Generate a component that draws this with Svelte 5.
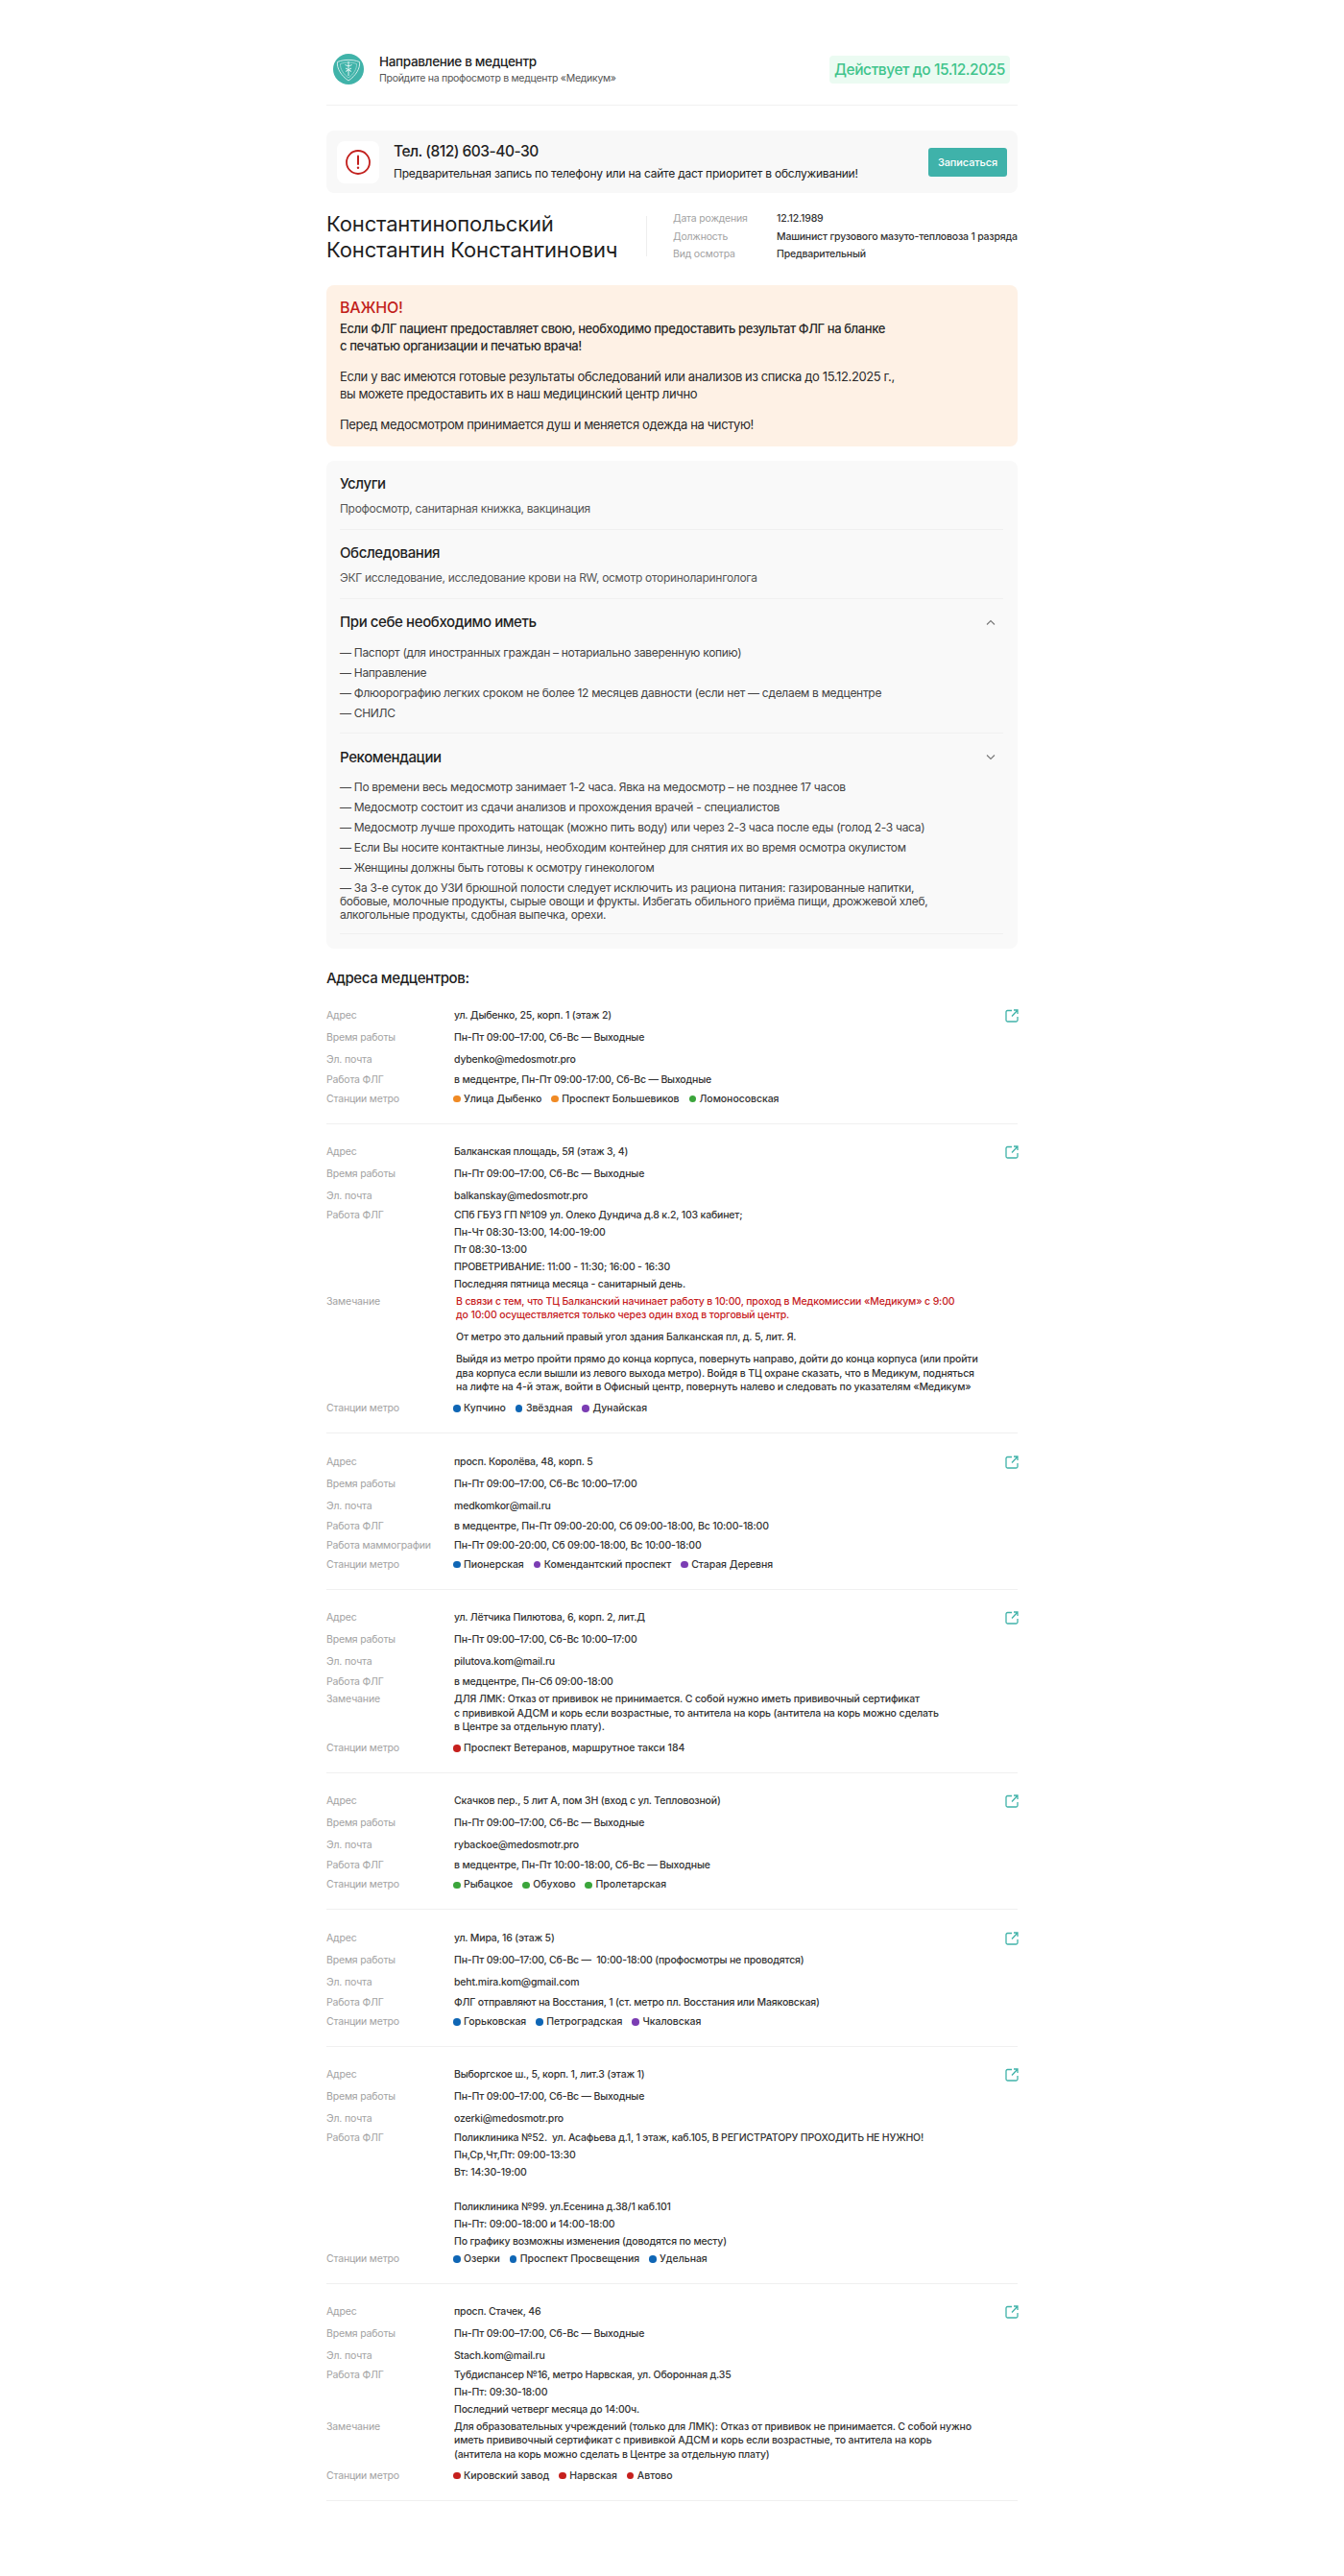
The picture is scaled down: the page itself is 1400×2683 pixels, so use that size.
<script lang="ts">
  type Station = { name: string; color: string };
  type Row = { label: string; lines?: string[]; paras?: { text: string; red?: boolean }[]; kind?: string };

  const orange = '#f08a24';
  const green = '#3ba53b';
  const blue = '#0f66b5';
  const purple = '#7b3db3';
  const red = '#c6201d';

  const st = (color: string, ...names: string[]) => names.map((name) => ({ name, color }));

  const must = [
    'Паспорт (для иностранных граждан – нотариально заверенную копию)',
    'Направление',
    'Флюорографию легких сроком не более 12 месяцев давности (если нет — сделаем в медцентре',
    'СНИЛС'
  ];

  const advice = [
    'По времени весь медосмотр занимает 1-2 часа. Явка на медосмотр – не позднее 17 часов',
    'Медосмотр состоит из сдачи анализов и прохождения врачей - специалистов',
    'Медосмотр лучше проходить натощак (можно пить воду) или через 2-3 часа после еды (голод 2-3 часа)',
    'Если Вы носите контактные линзы, необходим контейнер для снятия их во время осмотра окулистом',
    'Женщины должны быть готовы к осмотру гинекологом'
  ];

  const centers: { address: string; hours: string; email: string; rows: Row[]; stations: Station[] }[] = [
    {
      address: 'ул. Дыбенко, 25, корп. 1 (этаж 2)',
      hours: 'Пн-Пт 09:00–17:00, Сб-Вс — Выходные',
      email: 'dybenko@medosmotr.pro',
      rows: [{ label: 'Работа ФЛГ', lines: ['в медцентре, Пн-Пт 09:00-17:00, Сб-Вс — Выходные'] }],
      stations: [...st(orange, 'Улица Дыбенко', 'Проспект Большевиков'), ...st(green, 'Ломоносовская')]
    },
    {
      address: 'Балканская площадь, 5Я (этаж 3, 4)',
      hours: 'Пн-Пт 09:00–17:00, Сб-Вс — Выходные',
      email: 'balkanskay@medosmotr.pro',
      rows: [
        {
          label: 'Работа ФЛГ',
          lines: [
            'СПб ГБУЗ ГП №109 ул. Олеко Дундича д.8 к.2, 103 кабинет;',
            'Пн-Чт 08:30-13:00, 14:00-19:00',
            'Пт 08:30-13:00',
            'ПРОВЕТРИВАНИЕ: 11:00 - 11:30; 16:00 - 16:30',
            'Последняя пятница месяца - санитарный день.'
          ]
        },
        {
          label: 'Замечание',
          kind: 'inset',
          paras: [
            {
              red: true,
              text: 'В связи с тем, что ТЦ Балканский начинает работу в 10:00, проход в Медкомиссии «Медикум» с 9:00\nдо 10:00 осуществляется только через один вход в торговый центр.'
            },
            { text: 'От метро это дальний правый угол здания Балканская пл, д. 5, лит. Я.' },
            {
              text: 'Выйдя из метро пройти прямо до конца корпуса, повернуть направо, дойти до конца корпуса (или пройти\nдва корпуса если вышли из левого выхода метро). Войдя в ТЦ охране сказать, что в Медикум, подняться\nна лифте на 4-й этаж, войти в Офисный центр, повернуть налево и следовать по указателям «Медикум»'
            }
          ]
        }
      ],
      stations: [...st(blue, 'Купчино', 'Звёздная'), ...st(purple, 'Дунайская')]
    },
    {
      address: 'просп. Королёва, 48, корп. 5',
      hours: 'Пн-Пт 09:00–17:00, Сб-Вс 10:00–17:00',
      email: 'medkomkor@mail.ru',
      rows: [
        { label: 'Работа ФЛГ', lines: ['в медцентре, Пн-Пт 09:00-20:00, Сб 09:00-18:00, Вс 10:00-18:00'] },
        { label: 'Работа маммографии', lines: ['Пн-Пт 09:00-20:00, Сб 09:00-18:00, Вс 10:00-18:00'] }
      ],
      stations: [...st(blue, 'Пионерская'), ...st(purple, 'Комендантский проспект', 'Старая Деревня')]
    },
    {
      address: 'ул. Лётчика Пилютова, 6, корп. 2, лит.Д',
      hours: 'Пн-Пт 09:00–17:00, Сб-Вс 10:00–17:00',
      email: 'pilutova.kom@mail.ru',
      rows: [
        { label: 'Работа ФЛГ', lines: ['в медцентре, Пн-Сб 09:00-18:00'] },
        {
          label: 'Замечание',
          paras: [
            {
              text: 'ДЛЯ ЛМК: Отказ от прививок не принимается. С собой нужно иметь прививочный сертификат\nс прививкой АДСМ и корь если возрастные, то антитела на корь (антитела на корь можно сделать\nв Центре за отдельную плату).'
            }
          ]
        }
      ],
      stations: st(red, 'Проспект Ветеранов, маршрутное такси 184')
    },
    {
      address: 'Скачков пер., 5 лит А, пом 3Н (вход с ул. Тепловозной)',
      hours: 'Пн-Пт 09:00–17:00, Сб-Вс — Выходные',
      email: 'rybackoe@medosmotr.pro',
      rows: [{ label: 'Работа ФЛГ', lines: ['в медцентре, Пн-Пт 10:00-18:00, Сб-Вс — Выходные'] }],
      stations: st(green, 'Рыбацкое', 'Обухово', 'Пролетарская')
    },
    {
      address: 'ул. Мира, 16 (этаж 5)',
      hours: 'Пн-Пт 09:00–17:00, Сб-Вс —  10:00-18:00 (профосмотры не проводятся)',
      email: 'beht.mira.kom@gmail.com',
      rows: [{ label: 'Работа ФЛГ', lines: ['ФЛГ отправляют на Восстания, 1 (ст. метро пл. Восстания или Маяковская)'] }],
      stations: [...st(blue, 'Горьковская', 'Петроградская'), ...st(purple, 'Чкаловская')]
    },
    {
      address: 'Выборгское ш., 5, корп. 1, лит.З (этаж 1)',
      hours: 'Пн-Пт 09:00–17:00, Сб-Вс — Выходные',
      email: 'ozerki@medosmotr.pro',
      rows: [
        {
          label: 'Работа ФЛГ',
          lines: [
            'Поликлиника №52.  ул. Асафьева д.1, 1 этаж, каб.105, В РЕГИСТРАТОРУ ПРОХОДИТЬ НЕ НУЖНО!',
            'Пн,Ср,Чт,Пт: 09:00-13:30',
            'Вт: 14:30-19:00',
            '',
            'Поликлиника №99. ул.Есенина д.38/1 каб.101',
            'Пн-Пт: 09:00-18:00 и 14:00-18:00',
            'По графику возможны изменения (доводятся по месту)'
          ]
        }
      ],
      stations: st(blue, 'Озерки', 'Проспект Просвещения', 'Удельная')
    },
    {
      address: 'просп. Стачек, 46',
      hours: 'Пн-Пт 09:00–17:00, Сб-Вс — Выходные',
      email: 'Stach.kom@mail.ru',
      rows: [
        {
          label: 'Работа ФЛГ',
          lines: ['Тубдиспансер №16, метро Нарвская, ул. Оборонная д.35', 'Пн-Пт: 09:30-18:00', 'Последний четверг месяца до 14:00ч.']
        },
        {
          label: 'Замечание',
          paras: [
            {
              text: 'Для образовательных учреждений (только для ЛМК): Отказ от прививок не принимается. С собой нужно\nиметь прививочный сертификат с прививкой АДСМ и корь если возрастные, то антитела на корь\n(антитела на корь можно сделать в Центре за отдельную плату)'
            }
          ]
        }
      ],
      stations: st(red, 'Кировский завод', 'Нарвская', 'Автово')
    }
  ];
</script>

<div class="page">
  <header class="top">
    <svg class="logo" viewBox="0 0 32 32" aria-hidden="true">
      <circle cx="16" cy="16" r="16" fill="#40b3a9" />
      <path d="M4.500 8.500c7-2.800 16-2.800 23 0 1 6.500-4 14.500-11.500 19.500C8.500 23 3.500 15 4.500 8.500z" fill="none" stroke="#cfecea" stroke-width="1" />
      <path d="M7.500 10.500c5.500-2 11.500-2 17 0 .4 5-3.200 11-8.500 14.500-5.300-3.500-8.900-9.500-8.500-14.500z" fill="none" stroke="#a5dcd7" stroke-width=".8" />
      <path d="M16 8v15M12.500 11.500c2.300 1.500 4.700 1.500 7 0M13 15l6 3.500M19 15l-6 3.500" fill="none" stroke="#e2f5f3" stroke-width="1" />
    </svg>
    <div class="top-text">
      <div class="top-title">Направление в медцентр</div>
      <div class="top-sub">Пройдите на профосмотр в медцентр «Медикум»</div>
    </div>
    <div class="valid">Действует до 15.12.2025</div>
  </header>

  <section class="call">
    <div class="call-icon">
      <svg viewBox="0 0 26 26" width="26" height="26" aria-hidden="true">
        <circle cx="13" cy="13" r="12" fill="none" stroke="#c21f1c" stroke-width="1.800" />
        <path d="M13 6.500v8.500" stroke="#c21f1c" stroke-width="2" stroke-linecap="round" />
        <circle cx="13" cy="18.800" r="1.200" fill="#c21f1c" />
      </svg>
    </div>
    <div class="call-text">
      <div class="call-phone">Тел. (812) 603-40-30</div>
      <div class="call-sub">Предварительная запись по телефону или на сайте даст приоритет в обслуживании!</div>
    </div>
    <button class="call-btn">Записаться</button>
  </section>

  <section class="person">
    <h1 class="name">Константинопольский<br />Константин Константинович</h1>
    <div class="person-sep"></div>
    <dl class="meta">
      <dt>Дата рождения</dt><dd>12.12.1989</dd>
      <dt>Должность</dt><dd>Машинист грузового мазуто-тепловоза 1 разряда</dd>
      <dt>Вид осмотра</dt><dd>Предварительный</dd>
    </dl>
  </section>

  <section class="important">
    <div class="important-title">ВАЖНО!</div>
    <p class="strong">Если ФЛГ пациент предоставляет свою, необходимо предоставить результат ФЛГ на бланке<br />с печатью организации и печатью врача!</p>
    <p>Если у вас имеются готовые результаты обследований или анализов из списка до 15.12.2025 г.,<br />вы можете предоставить их в наш медицинский центр лично</p>
    <p>Перед медосмотром принимается душ и меняется одежда на чистую!</p>
  </section>

  <section class="info">
    <div class="block">
      <h2>Услуги</h2>
      <div class="block-text">Профосмотр, санитарная книжка, вакцинация</div>
    </div>
    <div class="block">
      <h2>Обследования</h2>
      <div class="block-text">ЭКГ исследование, исследование крови на RW, осмотр оториноларинголога</div>
    </div>
    <div class="block">
      <h2>
        При себе необходимо иметь
        <svg class="chevron" viewBox="0 0 10 7" aria-hidden="true"><path d="M1 5.500L5 1.500L9 5.500" /></svg>
      </h2>
      <ul>
        {#each must as item}
          <li>— {item}</li>
        {/each}
      </ul>
    </div>
    <div class="block">
      <h2>
        Рекомендации
        <svg class="chevron" viewBox="0 0 10 7" aria-hidden="true"><path d="M1 1.500L5 5.500L9 1.500" /></svg>
      </h2>
      <ul>
        {#each advice as item}
          <li>— {item}</li>
        {/each}
        <li class="long">— За 3-е суток до УЗИ брюшной полости следует исключить из рациона питания: газированные напитки,<br />бобовые, молочные продукты, сырые овощи и фрукты. Избегать обильного приёма пищи, дрожжевой хлеб,<br />алкогольные продукты, сдобная выпечка, орехи.</li>
      </ul>
    </div>
  </section>

  <h3 class="centers-title">Адреса медцентров:</h3>

  {#each centers as c}
    <article class="center">
      <svg class="ext" viewBox="0 0 14 14" aria-hidden="true">
        <path d="M7 1.500H2.500a1.500 1.500 0 0 0-1.500 1.500v8.500a1.500 1.500 0 0 0 1.500 1.500h9a1.500 1.500 0 0 0 1.500-1.500V8" />
        <path d="M7 7.500L12.800 1.200M9 1h4v4" />
      </svg>
      <div class="row main"><span class="label">Адрес</span><span class="value">{c.address}</span></div>
      <div class="row main"><span class="label">Время работы</span><span class="value">{c.hours}</span></div>
      <div class="row main"><span class="label">Эл. почта</span><span class="value">{c.email}</span></div>
      {#each c.rows as r}
        {#if r.lines}
          <div class="row" class:multi={r.lines.length > 1}>
            <span class="label">{r.label}</span>
            <div class="value">
              {#each r.lines as line}
                <div class="line">{line || '\u00a0'}</div>
              {/each}
            </div>
          </div>
        {:else if r.paras}
          <div class="row note" class:inset={r.kind === 'inset'}>
            <span class="label">{r.label}</span>
            <div class="value">
              {#each r.paras as p}
                <p class:red={p.red}>{p.text}</p>
              {/each}
            </div>
          </div>
        {/if}
      {/each}
      <div class="row">
        <span class="label">Станции метро</span>
        <div class="stations">
          {#each c.stations as s}
            <span class="station"><i style="background: {s.color}"></i>{s.name}</span>
          {/each}
        </div>
      </div>
    </article>
  {/each}
</div>

<style>
  :global(body) {
    margin: 0;
    background: #fff;
    font-family: Inter, 'Liberation Sans', sans-serif;
    color: #222;
  }
  .page {
    width: 720px;
    margin: 0 auto;
    padding: 0 0 60px;
  }
  .top {
    display: flex;
    align-items: center;
    height: 110px;
    padding: 35px 8px 0 7px;
    box-sizing: border-box;
    border-bottom: 1px solid #f1f1f1;
  }
  .logo {
    width: 32px;
    height: 32px;
    margin-right: 16px;
    flex: none;
  }
  .top-text {
    flex: 1;
  }
  .top-title {
    font-size: 13.500px;
    letter-spacing: -0.33px;
    font-weight: 500;
    line-height: 18px;
    margin-bottom: 1px;
  }
  .top-sub {
    font-size: 10.500px;
    letter-spacing: -0.28px;
    line-height: 16px;
    color: #555;
  }
  .valid {
    background: #ebfbf2;
    color: #3fc48c;
    font-size: 15.500px;
    letter-spacing: -0.43px;
    font-weight: 500;
    line-height: 29px;
    padding: 0 5px;
    border-radius: 4px;
  }
  .call {
    display: flex;
    align-items: center;
    height: 65px;
    margin-top: 26px;
    padding: 0 11px;
    background: #f8f8f8;
    border-radius: 8px;
  }
  .call-icon {
    width: 44px;
    height: 44px;
    background: #fff;
    border-radius: 8px;
    display: flex;
    align-items: center;
    justify-content: center;
    margin-right: 15px;
    flex: none;
  }
  .call-text {
    flex: 1;
  }
  .call-phone {
    font-size: 15.500px;
    letter-spacing: -0.5px;
    font-weight: 500;
    line-height: 22px;
    margin-bottom: 3px;
  }
  .call-sub {
    font-size: 12px;
    letter-spacing: -0.23px;
    line-height: 18px;
  }
  .call-btn {
    width: 82px;
    height: 30px;
    border: 0;
    border-radius: 3px;
    background: #3fb2aa;
    color: #fff;
    font: 500 11px Inter, sans-serif;
    letter-spacing: -0.1px;
    padding: 0;
  }
  .person {
    display: flex;
    margin-top: 19px;
    height: 55px;
  }
  .name {
    width: 333px;
    flex: none;
    margin: 0;
    font-size: 22px;
    letter-spacing: -0.16px;
    font-weight: 400;
    line-height: 27px;
    color: #1f1f1f;
    white-space: nowrap;
  }
  .person-sep {
    width: 1px;
    height: 42px;
    margin-top: 5px;
    background: #eee;
    flex: none;
  }
  .meta {
    margin: -1px 0 0 27px;
    display: grid;
    grid-template-columns: 108px 1fr;
    grid-auto-rows: 18.500px;
    font-size: 10.500px;
    letter-spacing: -0.19px;
    line-height: 18.500px;
    white-space: nowrap;
  }
  .meta dt {
    color: #a2a2a2;
  }
  .meta dd {
    margin: 0;
    color: #333;
    font-weight: 500;
  }
  .important {
    margin-top: 22px;
    padding: 13px 14px 0;
    height: 168px;
    box-sizing: border-box;
    background: #fef1e5;
    border-radius: 8px;
    font-size: 13px;
    letter-spacing: -0.38px;
    line-height: 17.700px;
  }
  .important-title {
    color: #c21f1c;
    font-size: 16px;
    font-weight: 500;
    letter-spacing: -0.2px;
    line-height: 20px;
    margin-bottom: 4px;
  }
  .important p {
    margin: 0 0 14.700px;
    color: #2a2a2a;
  }
  .important .strong {
    font-weight: 500;
    letter-spacing: -0.41px;
  }
  .info {
    margin-top: 15px;
    padding: 0 15px 15px 14px;
    background: #f9f9f9;
    border-radius: 8px;
  }
  .block {
    padding-top: 14px;
    padding-bottom: 12px;
    border-bottom: 1px solid #f0f0f0;
  }
  .block:last-child {
    padding-top: 15px;
  }
  h2 {
    display: flex;
    justify-content: space-between;
    align-items: center;
    margin: 0 0 7px;
    font-size: 15px;
    letter-spacing: -0.4px;
    font-weight: 500;
    line-height: 20px;
    color: #1f1f1f;
  }
  .chevron {
    width: 10px;
    height: 7px;
    margin-right: 8px;
    fill: none;
    stroke: #777;
    stroke-width: 1.100;
  }
  .block-text {
    font-size: 12px;
    letter-spacing: -0.3px;
    line-height: 18px;
    color: #555;
  }
  ul {
    list-style: none;
    margin: 0 0 -2px;
    padding: 3.500px 0 0;
    font-size: 12px;
    letter-spacing: -0.3px;
    color: #444;
    white-space: nowrap;
  }
  li {
    line-height: 21px;
  }
  li.long {
    line-height: 14px;
    padding-top: 3.500px;
    padding-bottom: 2px;
  }
  .centers-title {
    margin: 21px 0 0;
    font-size: 15px;
    letter-spacing: -0.4px;
    font-weight: 500;
    line-height: 20px;
    padding-bottom: 18px;
    color: #222;
  }
  .center {
    position: relative;
    padding-bottom: 14px;
    margin-bottom: 18.500px;
    border-bottom: 1px solid #f0f0f0;
  }
  .ext {
    position: absolute;
    right: -1px;
    top: 4px;
    width: 14px;
    height: 14px;
    fill: none;
    stroke: #40b3a9;
    stroke-width: 1.300;
  }
  .row {
    display: grid;
    grid-template-columns: 133px 1fr;
    font-size: 10.500px;
    letter-spacing: -0.18px;
    line-height: 18px;
    margin-bottom: 2px;
  }
  .row.main {
    line-height: 22px;
    margin-bottom: 0;
  }
  .row.main + .row:not(.multi) {
    margin-top: 1px;
  }
  .row.multi {
    margin-top: -0.500px;
    margin-bottom: 0;
    line-height: 18px;
  }
  .label {
    color: #a2a2a2;
  }
  .value {
    color: #333;
    font-weight: 500;
    white-space: pre;
  }
  .note {
    margin-top: 2px;
    line-height: 14.600px;
    letter-spacing: -0.14px;
  }
  .note .value {
    margin-bottom: 3px;
  }
  .note.inset .value {
    padding-left: 2px;
  }
  .note p {
    margin: 0 0 8.500px;
  }
  .note p:last-child {
    margin-bottom: 0;
  }
  .note p.red {
    color: #c6201d;
  }
  .stations {
    display: flex;
    gap: 10px;
    margin-left: -1px;
    color: #333;
    font-weight: 500;
    letter-spacing: -0.05px;
  }
  .station {
    display: flex;
    align-items: center;
  }
  .station i {
    width: 7.500px;
    height: 7.500px;
    border-radius: 50%;
    margin-right: 3.500px;
  }
</style>
